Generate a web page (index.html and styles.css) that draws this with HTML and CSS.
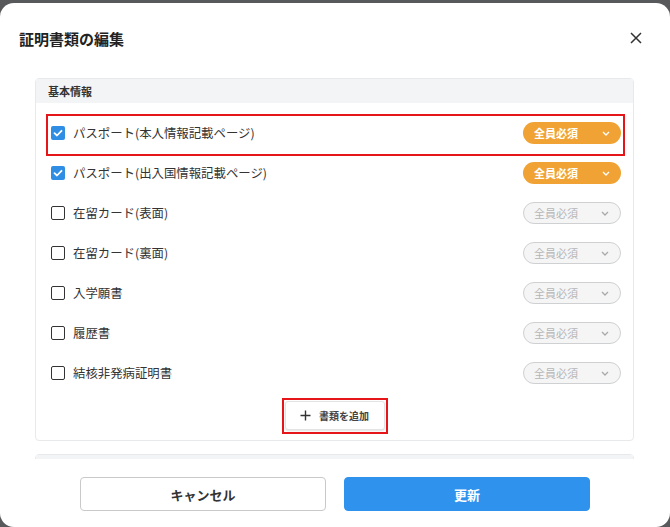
FILE: index.html
```html
<!DOCTYPE html>
<html lang="ja">
<head>
<meta charset="utf-8">
<link rel="stylesheet" href="styles.css">
</head>
<body>
<div class="modal">
  <div class="modal-header">
    <h1 class="title">証明書類の編集</h1>
    <svg class="close" width="12" height="12" viewBox="0 0 12 12"><path d="M1 1L11 11M11 1L1 11" stroke="#333" stroke-width="1.5" fill="none"/></svg>
  </div>
  <div class="modal-body">
    <div class="card">
      <div class="card-head">基本情報</div>
      <div class="list">
        <div class="row highlight">
          <span class="cb checked"><svg width="14" height="14" viewBox="0 0 14 14"><path d="M3.5 7.2L6 9.5L10.5 4.8" stroke="#fff" stroke-width="1.8" fill="none" stroke-linecap="round" stroke-linejoin="round"/></svg></span>
          <span class="label">パスポート(本人情報記載ページ)</span>
          <span class="pill on">全員必須<svg class="chev" width="8" height="5" viewBox="0 0 8 5"><path d="M1 1L4 4L7 1" stroke="#fff" stroke-width="1.3" fill="none"/></svg></span>
        </div>
        <div class="row">
          <span class="cb checked"><svg width="14" height="14" viewBox="0 0 14 14"><path d="M3.5 7.2L6 9.5L10.5 4.8" stroke="#fff" stroke-width="1.8" fill="none" stroke-linecap="round" stroke-linejoin="round"/></svg></span>
          <span class="label">パスポート(出入国情報記載ページ)</span>
          <span class="pill on">全員必須<svg class="chev" width="8" height="5" viewBox="0 0 8 5"><path d="M1 1L4 4L7 1" stroke="#fff" stroke-width="1.3" fill="none"/></svg></span>
        </div>
        <div class="row">
          <span class="cb"></span>
          <span class="label">在留カード(表面)</span>
          <span class="pill off">全員必須<svg class="chev" width="8" height="5" viewBox="0 0 8 5"><path d="M1 1L4 4L7 1" stroke="#aaa" stroke-width="1.3" fill="none"/></svg></span>
        </div>
        <div class="row">
          <span class="cb"></span>
          <span class="label">在留カード(裏面)</span>
          <span class="pill off">全員必須<svg class="chev" width="8" height="5" viewBox="0 0 8 5"><path d="M1 1L4 4L7 1" stroke="#aaa" stroke-width="1.3" fill="none"/></svg></span>
        </div>
        <div class="row">
          <span class="cb"></span>
          <span class="label">入学願書</span>
          <span class="pill off">全員必須<svg class="chev" width="8" height="5" viewBox="0 0 8 5"><path d="M1 1L4 4L7 1" stroke="#aaa" stroke-width="1.3" fill="none"/></svg></span>
        </div>
        <div class="row">
          <span class="cb"></span>
          <span class="label">履歴書</span>
          <span class="pill off">全員必須<svg class="chev" width="8" height="5" viewBox="0 0 8 5"><path d="M1 1L4 4L7 1" stroke="#aaa" stroke-width="1.3" fill="none"/></svg></span>
        </div>
        <div class="row">
          <span class="cb"></span>
          <span class="label">結核非発病証明書</span>
          <span class="pill off">全員必須<svg class="chev" width="8" height="5" viewBox="0 0 8 5"><path d="M1 1L4 4L7 1" stroke="#aaa" stroke-width="1.3" fill="none"/></svg></span>
        </div>
      </div>
      <div class="add-wrap">
        <button class="add-btn"><svg width="11" height="11" viewBox="0 0 11 11"><path d="M5.5 0.5V10.5M0.5 5.5H10.5" stroke="#333" stroke-width="1.4" fill="none"/></svg><span>書類を追加</span></button>
      </div>
    </div>
    <div class="card card2">
      <div class="card-head">&nbsp;</div>
    </div>
  </div>
  <div class="modal-footer">
    <button class="btn cancel">キャンセル</button>
    <button class="btn primary">更新</button>
  </div>
</div>
</body>
</html>
```

FILE: styles.css
```css
* { box-sizing: border-box; }
html, body { margin: 0; padding: 0; }
body {
  background: #58595b;
  font-family: "Noto Sans CJK JP", "Noto Sans", sans-serif;
  width: 670px;
  height: 527px;
  overflow: hidden;
}
.modal {
  margin-top: 3px;
  height: 524px;
  background: #fff;
  border-radius: 14px;
  display: flex;
  flex-direction: column;
  overflow: hidden;
}
.modal-header {
  height: 70px;
  flex: none;
  display: flex;
  align-items: center;
  justify-content: space-between;
  padding: 0 28px 0 19px;
}
.title {
  margin: 0;
  font-size: 15px;
  font-weight: 700;
  color: #222;
}
.modal-body {
  height: 386px;
  flex: none;
  overflow: hidden;
  padding: 5px 36px 0 35px;
}
.card {
  border: 1px solid #e8e9eb;
  border-radius: 4px;
  background: #fff;
}
.card2 { margin-top: 13px; }
.card-head {
  height: 24px;
  background: #f3f4f6;
  font-size: 11px;
  font-weight: 700;
  color: #333;
  padding-left: 12px;
  display: flex;
  align-items: center;
}
.list { padding-top: 10px; }
.row {
  position: relative;
  height: 40px;
  display: flex;
  align-items: center;
  padding: 0 12px 0 15px;
}
.row.highlight::after {
  content: "";
  position: absolute;
  left: 10px;
  right: 8px;
  top: 1px;
  bottom: -3px;
  border: 2px solid #e5151a;
}
.cb {
  width: 14px;
  height: 14px;
  border: 1.5px solid #333;
  border-radius: 2px;
  flex: none;
  display: flex;
}
.cb.checked {
  border: none;
  background: #2f8de4;
}
.label {
  margin-left: 8px;
  font-size: 12.4px;
  color: #333;
  flex: 1;
}
.pill {
  width: 98px;
  height: 22px;
  border-radius: 11px;
  display: flex;
  align-items: center;
  justify-content: space-between;
  padding: 0 11px 0 11px;
  font-size: 11px;
  flex: none;
}
.pill.on {
  background: #f0a334;
  color: #fff;
  font-weight: 700;
}
.pill.off {
  background: #f5f5f6;
  border: 1px solid #cfd0d2;
  color: #b5b5b5;
  padding-left: 10px;
}
.add-wrap {
  display: flex;
  justify-content: center;
  padding: 8px 0 10px;
}
.add-btn {
  position: relative;
  width: 100px;
  height: 29px;
  display: flex;
  align-items: center;
  justify-content: center;
  gap: 8px;
  background: #fff;
  border: 1px solid #e3e3e3;
  border-radius: 3px;
  box-shadow: 0 1px 2px rgba(0,0,0,0.12);
  font-family: inherit;
  font-size: 10px;
  font-weight: 700;
  color: #444;
  padding: 0;
}
.add-btn::after {
  content: "";
  position: absolute;
  left: -4px;
  right: -4px;
  top: -4px;
  bottom: -5px;
  border: 2px solid #e5151a;
}
.modal-footer {
  flex: 1;
  display: flex;
  justify-content: center;
  gap: 18px;
  padding-top: 18px;
}
.btn {
  width: 246px;
  height: 34px;
  border-radius: 4px;
  font-family: inherit;
  font-size: 13px;
  font-weight: 700;
}
.btn.cancel {
  background: #fff;
  border: 1px solid #c9c9c9;
  color: #333;
}
.btn.primary {
  background: #2f93ee;
  border: 1px solid #2f93ee;
  color: #fff;
}
```
